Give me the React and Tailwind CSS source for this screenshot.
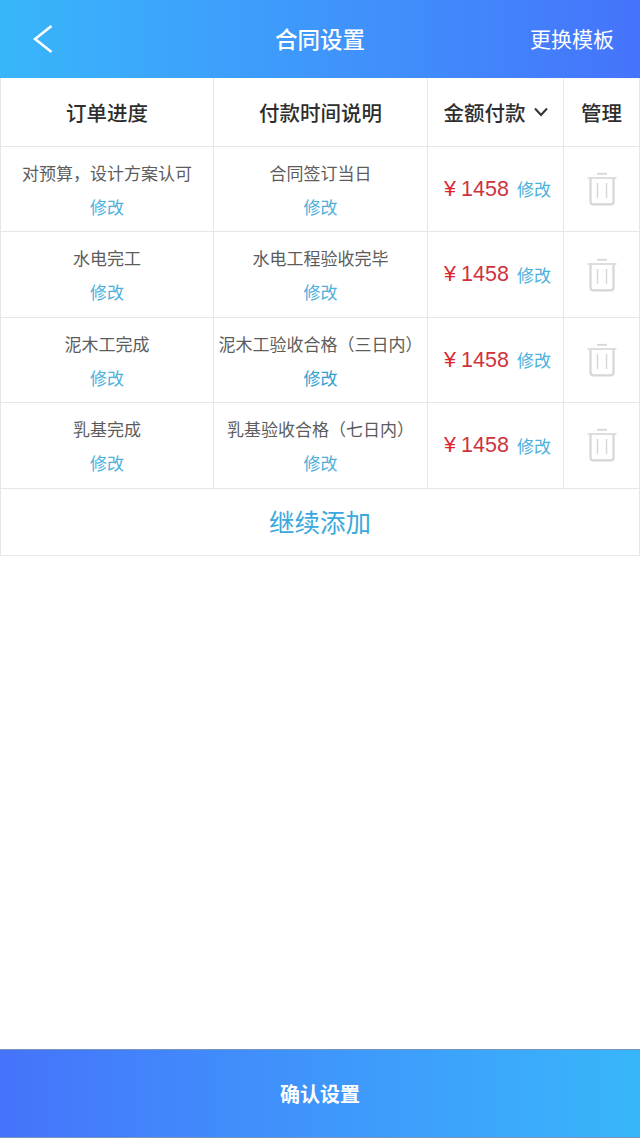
import React from 'react';

const rows = [
  { name: '对预算，设计方案认可', time: '合同签订当日', timeLink: 'text-[#4cb0dc]' },
  { name: '水电完工', time: '水电工程验收完毕', timeLink: 'text-[#4cb0dc]' },
  { name: '泥木工完成', time: '泥木工验收合格（三日内）', timeLink: 'text-[#2f9fd2]' },
  { name: '乳基完成', time: '乳基验收合格（七日内）', timeLink: 'text-[#4cb0dc]' },
];

const fontStack = { fontFamily: '"Noto Sans CJK SC", "Noto Sans", sans-serif' };

const TrashIcon = () => (
  <svg width="30" height="34" viewBox="0 0 30 34" fill="none" stroke="#d6d6d6" strokeWidth="1.6">
    <path d="M0.5 6H29.5" />
    <path d="M10 1.8H20" strokeWidth="1.8" />
    <path d="M3.5 6.5V29.5C3.5 31.3 4.6 32.3 6.4 32.3H23.6C25.4 32.3 26.5 31.3 26.5 29.5V6.5" strokeWidth="2.2" />
    <path d="M10.5 11V26M19.5 11V26" strokeWidth="1.4" />
  </svg>
);

const Row = ({ name, time, timeLink }) => (
  <div className="flex h-[85.4px] border-b border-[#e6e6e6]">
    <div className="w-[213px] shrink-0 flex flex-col items-center pt-[14px] border-r border-[#e6e6e6]">
      <span className="text-[17px] leading-[24px] text-[#5c5c5c] whitespace-nowrap">{name}</span>
      <span className="mt-[10px] text-[17px] leading-[24px] text-[#4cb0dc]">修改</span>
    </div>
    <div className="w-[214px] shrink-0 flex flex-col items-center pt-[14px] border-r border-[#e6e6e6]">
      <span className="text-[17px] leading-[24px] text-[#5c5c5c] whitespace-nowrap">{time}</span>
      <span className={`mt-[10px] text-[17px] leading-[24px] ${timeLink}`}>修改</span>
    </div>
    <div className="w-[136px] shrink-0 flex items-center justify-center gap-[8px] pl-[4px] border-r border-[#e6e6e6]">
      <span className="flex items-center gap-[5px] text-[21.5px] text-[#d0323c] whitespace-nowrap" style={{ fontFamily: '"Liberation Sans", sans-serif' }}>
        <span className="text-[#d9252b]">¥</span>
        <span>1458</span>
      </span>
      <span className="text-[17px] text-[#4cb0dc] whitespace-nowrap">修改</span>
    </div>
    <div className="flex-1 flex items-center justify-center">
      <TrashIcon />
    </div>
  </div>
);

export default function App() {
  return (
    <div className="relative w-[640px] h-[1138px] bg-white flex flex-col overflow-hidden" style={fontStack}>
      <header className="h-[78px] shrink-0 flex items-center px-[26px] bg-gradient-to-r from-[#38b6fa] to-[#4573fb] text-white">
        <div className="flex-1">
          <svg className="block ml-[7px]" width="20" height="30" viewBox="0 0 20 30" fill="none" stroke="#fff" strokeWidth="2.6">
            <path d="M18.5 2L2 15L18.5 28" />
          </svg>
        </div>
        <span className="text-[22.5px] font-medium">合同设置</span>
        <div className="flex-1 flex justify-end">
          <span className="text-[21px]">更换模板</span>
        </div>
      </header>

      <div className="border-l border-r border-[#e6e6e6]">
        <div className="flex h-[69px] border-b border-[#e6e6e6] text-[20.5px] font-medium text-[#2e2e2e]">
          <div className="w-[213px] shrink-0 flex items-center justify-center border-r border-[#e6e6e6]">订单进度</div>
          <div className="w-[214px] shrink-0 flex items-center justify-center border-r border-[#e6e6e6]">付款时间说明</div>
          <div className="w-[136px] shrink-0 flex items-center justify-center gap-[8px] border-r border-[#e6e6e6]">
            <span>金额付款</span>
            <svg width="14" height="10" viewBox="0 0 14 10" fill="none" stroke="#333" strokeWidth="2">
              <path d="M1 1.5L7 8L13 1.5" />
            </svg>
          </div>
          <div className="flex-1 flex items-center justify-center">管理</div>
        </div>

        {rows.map((row) => (
          <Row key={row.name} {...row} />
        ))}

        <div className="h-[67px] flex items-center justify-center border-b border-[#ebebeb] text-[25.5px] text-[#3aa9de]">
          继续添加
        </div>
      </div>

      <div className="flex-1" />

      <footer className="h-[89px] shrink-0 flex items-center justify-center bg-gradient-to-r from-[#4573fb] to-[#38b6fa] border-t border-b border-[#7a94b8] text-white text-[20px] font-bold">
        确认设置
      </footer>
    </div>
  );
}
